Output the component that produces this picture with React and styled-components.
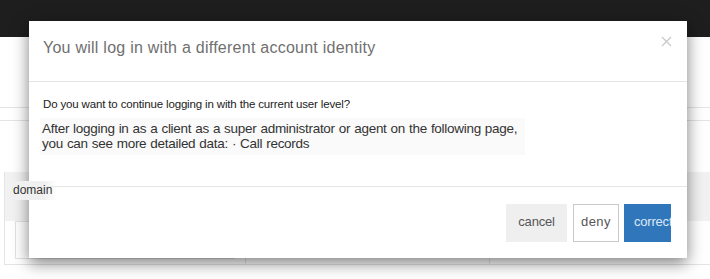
import React from "react";
import styled, { createGlobalStyle } from "styled-components";

const GlobalStyle = createGlobalStyle`
  html, body {
    margin: 0;
    padding: 0;
    background: #fff;
    overflow: hidden;
    font-family: "Liberation Sans", Arial, sans-serif;
  }
`;

function CloseIcon() {
  return (
    <svg width="11" height="11" viewBox="0 0 11 11">
      <path d="M1 1 L10 10 M10 1 L1 10" stroke="#c9c9c9" strokeWidth="1.3" fill="none" />
    </svg>
  );
}

export default function App() {
  return (
    <>
      <GlobalStyle />
      <Page>
        <Navbar />
        <Toolbar />
        <FilterRow />
        <Spacer />
        <Table>
          <HeadRow>
            <HeadCell $w={241}>
              <Label>domain</Label>
            </HeadCell>
            <HeadCell $w={244} />
            <HeadCell />
          </HeadRow>
          <BodyRow>
            <BodyCell $w={241}>
              <InputBox />
            </BodyCell>
            <BodyCell $w={244} />
            <BodyCell />
          </BodyRow>
        </Table>

        <Modal>
          <Header>
            <Title>You will log in with a different account identity</Title>
            <Close>
              <CloseIcon />
            </Close>
          </Header>
          <Body>
            <Question>Do you want to continue logging in with the current user level?</Question>
            <Note>
              After logging in as a client as a super administrator or agent on the following page,
              <br />
              you can see more detailed data: · Call records
            </Note>
          </Body>
          <Footer>
            <Button $kind="cancel" $w={61}>cancel</Button>
            <Button $kind="deny" $w={46}>deny</Button>
            <Button $kind="primary" $w={47}>correct</Button>
          </Footer>
        </Modal>
      </Page>
    </>
  );
}

const Page = styled.div`
  position: relative;
  width: 710px;
  height: 279px;
  overflow: hidden;
  display: flex;
  flex-direction: column;
`;

const Navbar = styled.div`
  height: 37px;
  background: #1e1e1e;
  flex-shrink: 0;
`;

const Toolbar = styled.div`
  height: 70px;
  border-bottom: 1px solid #e4e4e4;
  flex-shrink: 0;
`;

const FilterRow = styled.div`
  height: 12px;
  border-bottom: 1px solid #e4e4e4;
  flex-shrink: 0;
`;

const Spacer = styled.div`
  height: 51px;
  flex-shrink: 0;
`;

const Table = styled.div`
  display: flex;
  flex-direction: column;
  margin-left: 4px;
  border-left: 1px solid #e4e4e4;
`;

const HeadRow = styled.div`
  display: flex;
  height: 49px;
  background: #f2f2f2;
`;

const HeadCell = styled.div`
  position: relative;
  box-sizing: border-box;
  width: ${(p) => (p.$w ? `${p.$w}px` : "auto")};
  flex: ${(p) => (p.$w ? "none" : "1")};
  border-right: 1px solid #e6e6e6;
  &:last-child {
    border-right: none;
  }
`;

const Label = styled.div`
  position: relative;
  z-index: 20;
  margin-top: 9px;
  margin-left: 8px;
  width: 44px;
  padding: 2px 0 3px;
  font-size: 12px;
  color: #333;
  background: linear-gradient(to right, #f0f0f0 70%, rgba(240, 240, 240, 0));
`;

const BodyRow = styled.div`
  display: flex;
  height: 43px;
  border-bottom: 1px solid #e4e4e4;
`;

const BodyCell = styled.div`
  box-sizing: border-box;
  width: ${(p) => (p.$w ? `${p.$w}px` : "auto")};
  flex: ${(p) => (p.$w ? "none" : "1")};
  border-right: 1px solid #e6e6e6;
  padding: 0 10px;
  &:last-child {
    border-right: none;
  }
`;

const InputBox = styled.div`
  height: 36px;
  border: 1px solid #e2e2e2;
  background: #fff;
`;

const Modal = styled.div`
  position: absolute;
  z-index: 10;
  left: 29px;
  top: 21px;
  width: 658px;
  height: 237px;
  background: #fff;
  box-shadow: 0 5px 15px rgba(0, 0, 0, 0.5);
  display: flex;
  flex-direction: column;
`;

const Header = styled.div`
  height: 60px;
  border-bottom: 1px solid #e5e5e5;
  display: flex;
  align-items: center;
  justify-content: space-between;
  padding: 0 16px 0 14px;
  flex-shrink: 0;
`;

const Title = styled.div`
  font-size: 16px;
  color: #707070;
  letter-spacing: 0.25px;
  margin-top: -7px;
`;

const Close = styled.div`
  display: flex;
  margin-top: -20px;
  margin-right: -1px;
`;

const Body = styled.div`
  height: 105px;
  padding: 15px 13px 0;
  box-sizing: border-box;
  border-bottom: 1px solid #e5e5e5;
  flex-shrink: 0;
`;

const Question = styled.div`
  font-size: 11.5px;
  letter-spacing: -0.15px;
  color: #222;
  margin-left: 1px;
  line-height: 14px;
  white-space: nowrap;
`;

const Note = styled.div`
  margin-top: 7px;
  width: 483px;
  margin-left: -2px;
  padding: 3px 0 4px 2px;
  font-size: 13.5px;
  letter-spacing: -0.28px;
  word-spacing: 0.5px;
  line-height: 15px;
  color: #333;
  background: #fafafa;
  white-space: nowrap;
`;

const Button = styled.div`
  width: ${(p) => p.$w}px;
  height: 38px;
  box-sizing: border-box;
  overflow: hidden;
  white-space: nowrap;
  display: flex;
  align-items: center;
  justify-content: ${(p) => (p.$kind === "primary" ? "flex-start" : "center")};
  padding-left: ${(p) => (p.$kind === "primary" ? "10px" : "0")};
  padding-bottom: 4px;
  font-size: 13px;
  color: ${(p) => (p.$kind === "primary" ? "#dfe9f5" : "#555")};
  letter-spacing: ${(p) => (p.$kind === "deny" ? "0.4px" : "-0.2px")};
  background: ${(p) =>
    p.$kind === "primary" ? "#2f76bb" : p.$kind === "cancel" ? "#efefef" : "#fff"};
  border: ${(p) => (p.$kind === "deny" ? "1px solid #c9c9c9" : "none")};
`;

const Footer = styled.div`
  flex: 1;
  display: flex;
  justify-content: flex-end;
  align-items: flex-start;
  gap: 5px;
  padding: 17px 16px 0 0;
  & > :first-child {
    margin-right: 1px;
  }
`;
